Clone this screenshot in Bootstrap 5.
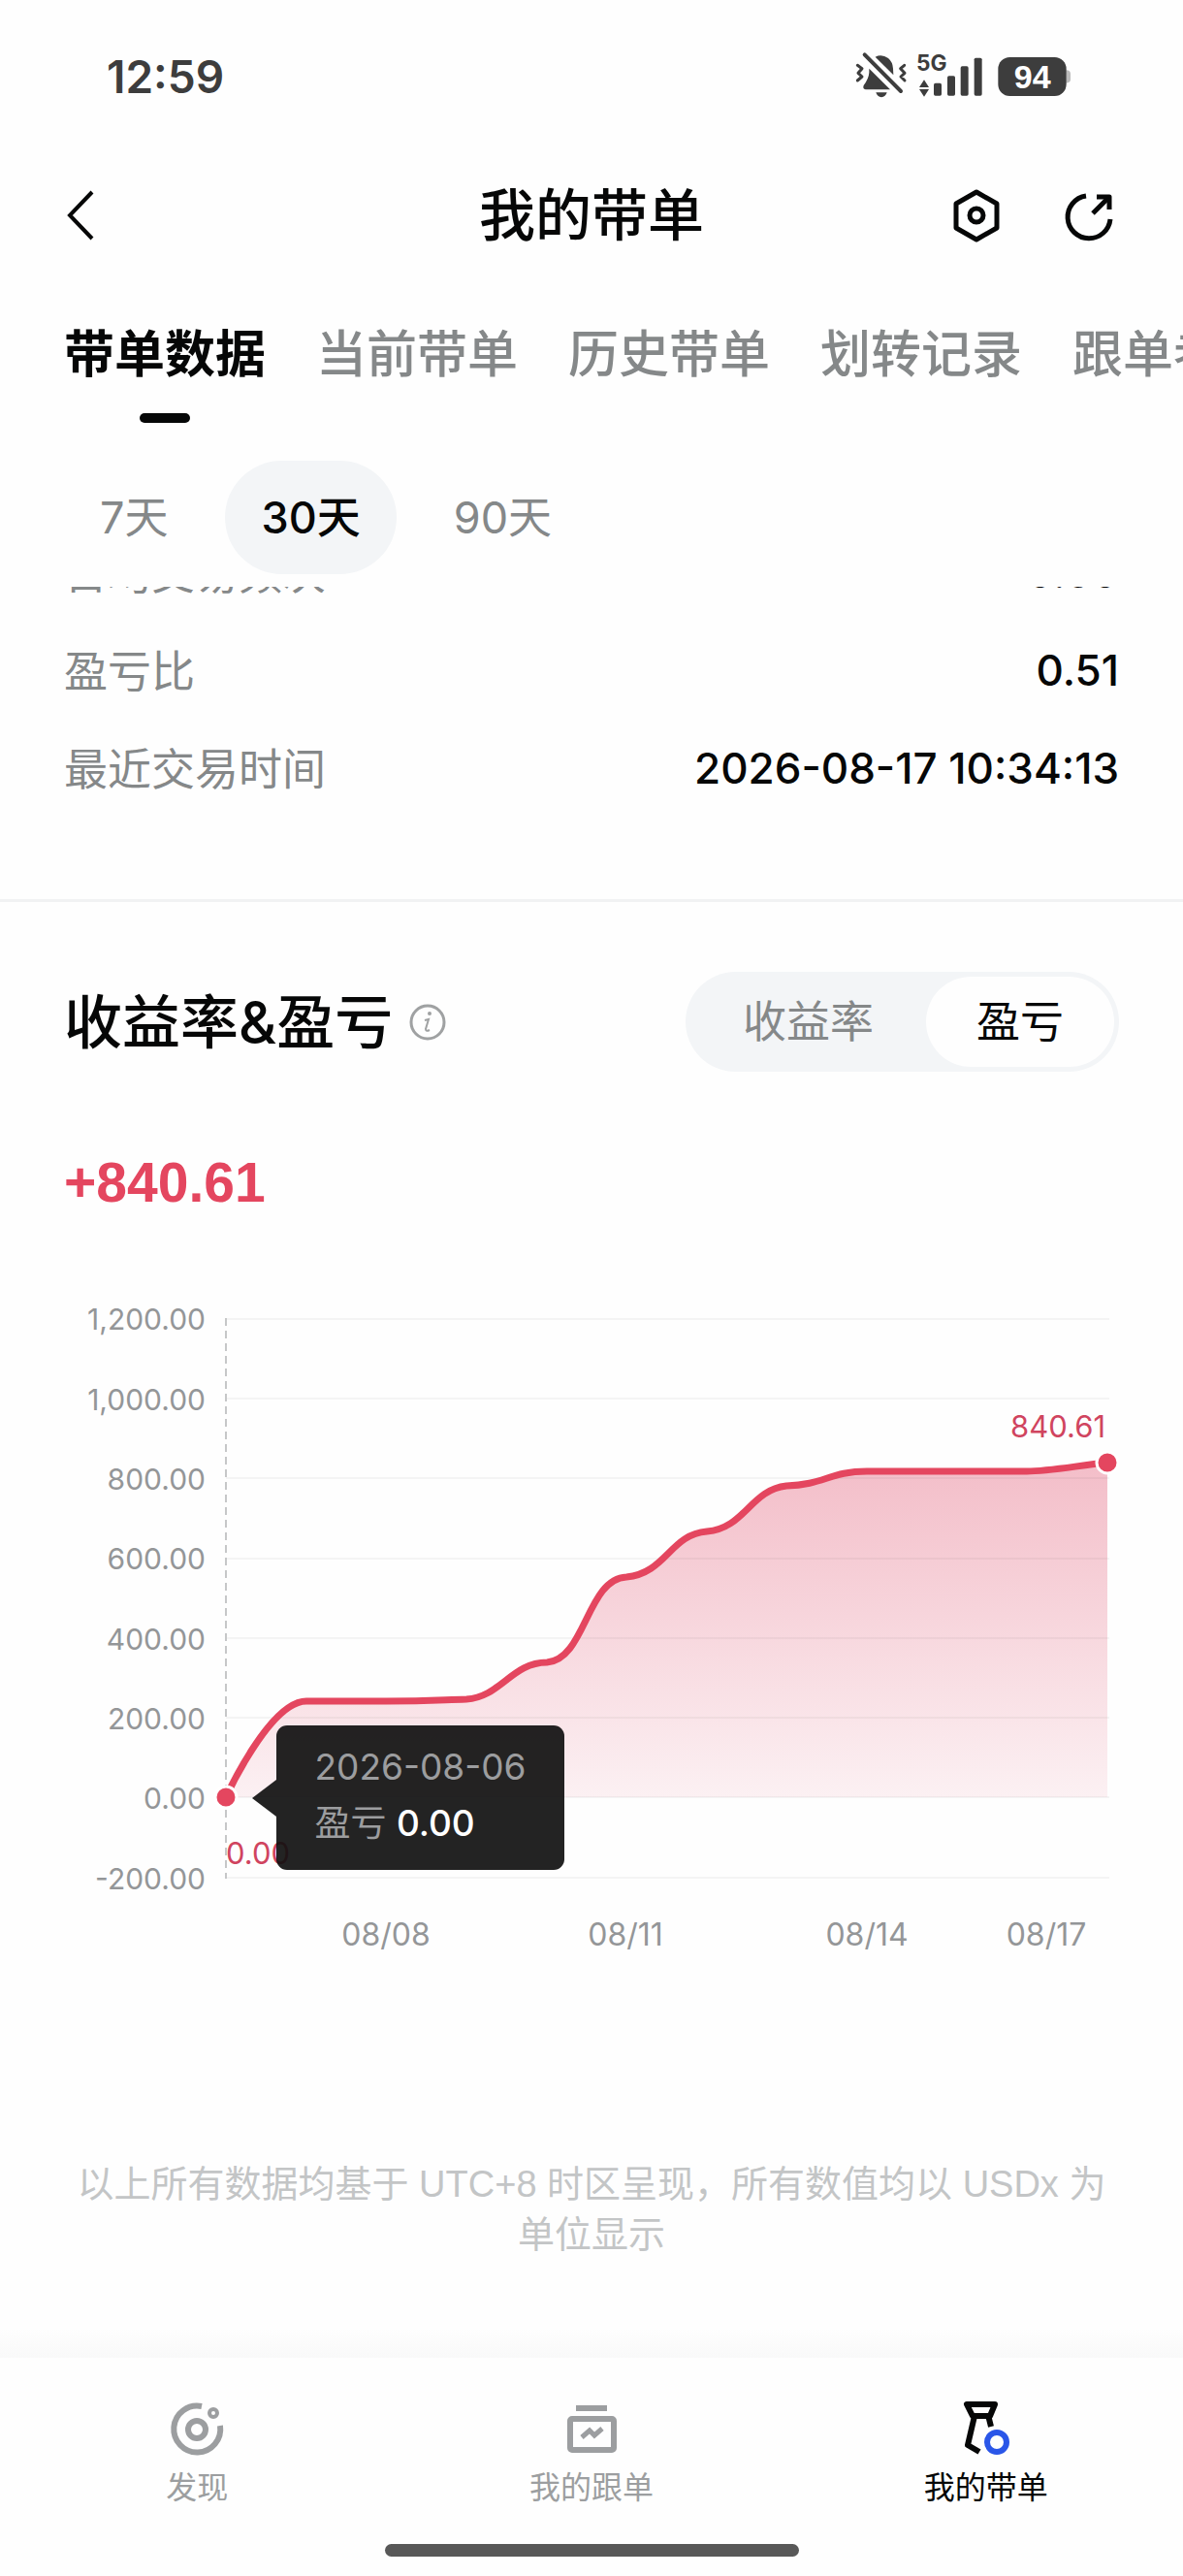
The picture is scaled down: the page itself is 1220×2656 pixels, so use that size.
<!DOCTYPE html>
<html lang="zh-CN">
<head>
<meta charset="utf-8">
<meta name="viewport" content="width=device-width, initial-scale=1">
<title>我的带单</title>
<link rel="stylesheet" href="https://cdn.jsdelivr.net/npm/bootstrap@5.3.0/dist/css/bootstrap.min.css">
<style>
:root{--ink:#060707;--muted:#858889;--soft:#f3f5f7;--rise:#e4465f;--edge:66px}
body{font-family:Inter,"Noto Sans CJK SC",sans-serif;color:var(--ink);background:#fefefe;line-height:1.5}
svg{display:block;overflow:visible}
svg text{font-family:Inter,"Noto Sans CJK SC",sans-serif}
button{font:inherit}
.app-edge{padding-left:var(--edge);padding-right:var(--edge)}
.status-bar{height:158px;padding-left:110px;padding-right:114px;color:#3d3d3d}
.status-clock{font-size:46px;font-weight:600;line-height:48px}
.status-bar .charge{font-family:"Liberation Sans",sans-serif}
.app-header{height:128px;display:grid;grid-template-columns:1fr auto 1fr}
.app-title{font-size:58px;font-weight:500;line-height:72px}
.app-actions{gap:54px}
.icon-btn{background:none;border:0;padding:0;color:var(--ink)}
.data-tabs{gap:52px;height:156px;overflow:hidden;margin-left:var(--edge)}
.data-tabs .nav-link{font-size:52px;font-weight:500;line-height:64px;padding:48px 0 0;color:var(--muted);white-space:nowrap}
.data-tabs .nav-link.active{color:var(--ink);font-weight:600}
.data-tabs .nav-link.active::after{content:"";display:block;width:52px;height:10px;margin:28px auto 0;border-radius:5px;background:var(--ink)}
.range-row{height:163px;padding-top:33px;gap:22px}
.range-pill{height:117px;padding:0 37px;border:0;border-radius:59px;background:none;font-size:45px;color:var(--muted)}
.range-pill.active{background:var(--soft);color:var(--ink);font-weight:500}
.stat-panel{overflow:hidden;height:322px}
.stat-list{margin:-64px 0 0}
.stat-row{height:101px;font-size:45px}
.stat-row dt{font-weight:400;color:var(--muted)}
.stat-row dd{margin:0;padding-bottom:4px;font-size:44px;font-weight:500}
.section-rule{height:3px;background:#f1f2f3}
.section-head{margin-top:72px}
.section-title{font-size:60px;font-weight:500;line-height:72px;margin:0}
.switch-box{padding:5px;border-radius:52px;background:var(--soft)}
.switch-box button{height:93px;border:0;border-radius:47px;background:none;font-size:45px;padding:0 54px;color:var(--muted)}
.switch-box button.active{background:#fefefe;color:var(--ink);padding:0 52px}
.total{font-family:"Liberation Sans",sans-serif;font-size:57px;font-weight:700;line-height:72px;color:var(--rise);margin:78px 0 0}
.chart-box{margin-top:70px}
.axis-text{font-size:32px;fill:#949698}
.axis-value{font-size:30px}
.mark-text{font-size:31px;fill:#d0445f}
.tip{left:23.4%;top:64.9%;width:297px;height:149px;padding:14px 39px;border-radius:11px;background:rgba(16,16,16,.92);color:#9c9d9f;font-size:37px;line-height:58px;white-space:nowrap}
.tip::before{content:"";position:absolute;left:-25px;top:56px;border:solid transparent;border-width:19px 25px 19px 0;border-right-color:rgba(16,16,16,.92)}
.tip strong{color:#fff;font-weight:500}
.note{font-family:"Liberation Sans","Noto Sans CJK SC",sans-serif;font-size:38px;line-height:52px;color:#c3c5c6;margin:201px 0 0;text-align:center}
.fade-edge{height:30px;margin-top:71px;background:linear-gradient(#fefefe,#f9f9f9)}
.tab-bar{padding-top:44px}
.tab-bar a{font-size:32px;line-height:40px;color:#9c9ea0;text-decoration:none;gap:10px}
.tab-bar a.active{color:var(--ink)}
.home-bar{width:427px;height:13px;border-radius:7px;background:#585858;margin:38px auto 0}
</style>
<script src="https://cdn.jsdelivr.net/npm/bootstrap@5.3.0/dist/js/bootstrap.bundle.min.js"></script>
</head>
<body>
<div class="status-bar d-flex justify-content-between align-items-center">
  <span class="status-clock">12:59</span>
  <svg width="224" height="50" viewBox="0 0 672 150" fill="#3d3d3d" role="img" aria-label="静音 5G 电量 94">
    <g transform="translate(-66 -70)">
      <path d="M128 84Q148 74 168 88Q182 100 183 120L184 140ZM109 120L109 132Q108 150 92 172Q88 183 98 185H174ZM130 194H164Q160 208 147 209Q134 208 130 194Z"/>
      <path d="M95 77L207 190" fill="none" stroke="#3d3d3d" stroke-width="12" stroke-linecap="round"/>
      <path d="M73 110L87 120L75 134L87 145L73 157M218 110L206 120L219 134L207 145L219 157" fill="none" stroke="#3d3d3d" stroke-width="9" stroke-linejoin="round" stroke-linecap="round"/>
      <text x="255" y="126" font-size="68" font-weight="700">5G</text>
      <path d="M264 178L279 155L294 178ZM264 184L279 207L294 184Z"/>
      <rect x="309" y="165" width="24" height="39" rx="5"/><rect x="351" y="143" width="24" height="61" rx="5"/><rect x="392" y="113" width="24" height="91" rx="5"/><rect x="434" y="87" width="24" height="117" rx="5"/>
      <path d="M718 125Q732 126 732 136V154Q732 164 718 165Z" fill="#bbb"/>
      <rect x="508" y="85" width="211" height="120" rx="36"/>
      <text class="charge" x="614" y="181" font-size="102" font-weight="700" fill="#fff" text-anchor="middle">94</text>
    </g>
  </svg>
</div>

<header class="app-header app-edge align-items-center">
  <div class="d-flex">
    <button class="icon-btn" type="button" aria-label="返回">
      <svg width="34" height="52" viewBox="0 0 34 52" fill="none" stroke="currentColor" stroke-width="4"><path d="M29 2L6 26L29 50"/></svg>
    </button>
  </div>
  <h1 class="app-title m-0">我的带单</h1>
  <div class="app-actions d-flex justify-content-end pe-1">
    <button class="icon-btn" type="button" aria-label="设置">
      <svg width="70" height="56" viewBox="0 0 70 56" fill="none" stroke="currentColor" stroke-width="5" stroke-linejoin="round"><path d="M35 4L56 16V41L35 53L14 41V16Z"/><circle cx="35" cy="28" r="7"/></svg>
    </button>
    <button class="icon-btn" type="button" aria-label="分享">
      <svg width="54" height="56" viewBox="0 0 54 56" fill="none" stroke="currentColor" stroke-width="5"><path d="M24 8A22 22 0 1 0 49 32"/><path d="M31 26L48 9"/><path d="M35 9H48V22" stroke-linejoin="round"/></svg>
    </button>
  </div>
</header>

<ul class="nav data-tabs flex-nowrap ps-0 mb-0">
  <li class="nav-item"><a class="nav-link active" aria-current="page" href="#">带单数据</a></li>
  <li class="nav-item"><a class="nav-link" href="#">当前带单</a></li>
  <li class="nav-item"><a class="nav-link" href="#">历史带单</a></li>
  <li class="nav-item"><a class="nav-link" href="#">划转记录</a></li>
  <li class="nav-item"><a class="nav-link" href="#">跟单者</a></li>
</ul>

<div class="range-row app-edge d-flex align-items-start">
  <button class="range-pill" type="button">7天</button>
  <button class="range-pill active" type="button">30天</button>
  <button class="range-pill" type="button">90天</button>
</div>

<main>
  <section class="stat-panel app-edge">
    <dl class="stat-list">
      <div class="stat-row d-flex justify-content-between align-items-center"><dt>日均交易频次</dt><dd>0.60</dd></div>
      <div class="stat-row d-flex justify-content-between align-items-center"><dt>盈亏比</dt><dd>0.51</dd></div>
      <div class="stat-row d-flex justify-content-between align-items-center"><dt>最近交易时间</dt><dd>2026-08-17 10:34:13</dd></div>
    </dl>
  </section>
  <div class="section-rule"></div>

  <section>
    <div class="section-head app-edge d-flex justify-content-between align-items-center">
      <div class="d-flex align-items-center gap-3">
        <h2 class="section-title">收益率&amp;盈亏</h2>
        <button class="icon-btn" type="button" aria-label="说明">
          <svg width="40" height="40" viewBox="0 0 40 40" fill="none" stroke="#9fa1a2" stroke-width="3"><circle cx="20" cy="20" r="17"/><path d="M17 18L21 17L18 27Q18 30 22 28" stroke-width="2"/><circle cx="22" cy="11" r="2" fill="#9fa1a2" stroke="none"/></svg>
        </button>
      </div>
      <div class="switch-box d-flex" role="group" aria-label="图表类型">
        <button type="button">收益率</button>
        <button type="button" class="active">盈亏</button>
      </div>
    </div>
    <p class="total app-edge">+840.61</p>

    <div class="chart-box position-relative">
      <svg width="100%" viewBox="0 1325 1220 700" role="img" aria-label="盈亏走势">
        <defs><linearGradient id="fade" x1="0" y1="0" x2="0" y2="1"><stop offset="0" stop-color="#dd3b5c" stop-opacity=".33"/><stop offset="1" stop-color="#dd3b5c" stop-opacity=".07"/></linearGradient></defs>
        <path d="M233 1853C233 1853 270 1754 316 1754H398C440 1754 450 1753 481 1752C516 1750 528 1714 564 1714C604 1711 605 1628 646 1626C687 1622 691 1582 729 1579C768 1576 774 1536 811 1532C850 1531 856 1517 894 1517H1059C1082 1517 1112 1511 1142 1508V1853Z" fill="url(#fade)"/>
        <path d="M233 1360H1144M233 1442H1144M233 1524H1144M233 1607H1144M233 1689H1144M233 1771H1144M233 1853H1144M233 1936H1144" stroke="#000" stroke-opacity=".04" stroke-width="2"/>
        <path d="M233 1359V1937" stroke="#c6c7c8" stroke-width="2" stroke-dasharray="8 5"/>
        <path d="M233 1853C233 1853 278 1754 316 1754H398C440 1754 450 1753 481 1752C516 1750 528 1714 564 1714C604 1711 605 1628 646 1626C687 1622 691 1582 729 1579C768 1576 774 1536 811 1532C850 1531 856 1517 894 1517H1059C1082 1517 1112 1511 1142 1508" fill="none" stroke="#e4465f" stroke-width="7"/>
        <g fill="#e4465f" stroke="#fff" stroke-width="3"><circle cx="233" cy="1853" r="11"/><circle cx="1142" cy="1508" r="11"/></g>
        <g class="axis-text axis-value" text-anchor="end">
          <text x="212" y="1371">1,200.00</text><text x="212" y="1454">1,000.00</text><text x="212" y="1536">800.00</text><text x="212" y="1618">600.00</text>
          <text x="212" y="1701">400.00</text><text x="212" y="1783">200.00</text><text x="212" y="1865">0.00</text><text x="212" y="1948">-200.00</text>
        </g>
        <g class="axis-text" text-anchor="middle">
          <text x="398" y="2006">08/08</text><text x="645" y="2006">08/11</text><text x="894" y="2006">08/14</text><text x="1079" y="2006">08/17</text>
        </g>
        <text class="mark-text" x="1140" y="1482" text-anchor="end">840.61</text>
        <text class="mark-text" x="233" y="1922">0.00</text>
      </svg>
      <div class="tip position-absolute" role="tooltip"><div>2026-08-06</div><div>盈亏 <strong>0.00</strong></div></div>
    </div>

    <p class="note app-edge">以上所有数据均基于 UTC+8 时区呈现，所有数值均以 USDx 为单位显示</p>
  </section>
</main>

<div class="fade-edge"></div>
<nav class="tab-bar row g-0">
  <a class="col d-flex flex-column align-items-center" href="#">
    <svg width="60" height="60" viewBox="0 0 60 60" fill="none" stroke="currentColor"><path d="M35 6A24 24 0 1 0 54 26" stroke-width="6"/><circle cx="30" cy="30" r="9" stroke-width="6"/><circle cx="47" cy="13" r="4" stroke-width="4"/></svg>
    <span>发现</span>
  </a>
  <a class="col d-flex flex-column align-items-center" href="#">
    <svg width="60" height="60" viewBox="0 0 60 60" fill="none" stroke="currentColor"><path d="M14 8H46" stroke-width="6"/><rect x="8" y="19" width="45" height="32" rx="2" stroke-width="6"/><path d="M20 38L28 31L33 36L41 29" stroke-width="5"/></svg>
    <span>我的跟单</span>
  </a>
  <a class="col d-flex flex-column align-items-center active" href="#">
    <svg width="60" height="60" viewBox="0 0 60 60" fill="none" stroke="currentColor"><path d="M10 4H39L34 16H16ZM18 16L11 46L23 53M32 15L35 27" stroke-width="6" stroke-linejoin="round"/><circle cx="41" cy="43" r="10" stroke="#2a56e8" stroke-width="6"/></svg>
    <span>我的带单</span>
  </a>
</nav>
<div class="home-bar"></div>
</body>
</html>
